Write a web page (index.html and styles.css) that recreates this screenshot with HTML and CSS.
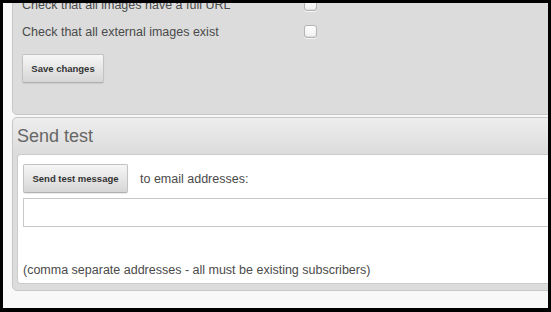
FILE: index.html
```html
<!DOCTYPE html>
<html>
<head>
<meta charset="utf-8">
<link rel="stylesheet" href="styles.css">
</head>
<body>
<div class="screen">
  <div class="panel panel-top">
    <div class="row">
      <span class="label">Check that all images have a full URL</span>
      <span class="check"></span>
    </div>
    <div class="row">
      <span class="label">Check that all external images exist</span>
      <span class="check"></span>
    </div>
    <button class="btn btn-save">Save changes</button>
  </div>
  <div class="panel panel-send">
    <div class="panel-head">Send test</div>
    <div class="panel-body">
      <div class="send-row">
        <button class="btn btn-send">Send test message</button>
        <span class="to">to email addresses:</span>
      </div>
      <div class="input"></div>
      <p class="note">(comma separate addresses - all must be existing subscribers)</p>
    </div>
  </div>
</div>
</body>
</html>
```

FILE: styles.css
```css
html, body {
  margin: 0;
  padding: 0;
  background: #000;
  height: 312px;
  overflow: hidden;
}
.screen {
  position: relative;
  top: 3px;
  margin-left: 3px;
  width: 545px;
  height: 305px;
  overflow: hidden;
  background: #f8f8f8;
  padding-left: 9px;
  box-sizing: border-box;
  font-family: "Liberation Sans", Arial, sans-serif;
  font-size: 12.5px;
  color: #4a4a4a;
}
.panel {
  width: 560px;
  box-sizing: border-box;
  background: #dcdcdc;
  border: 1px solid #c8c8c8;
}
.panel-top {
  margin-top: -20px;
  padding: 7px 0 31px 9px;
  border-radius: 0 0 5px 5px;
}
.row {
  display: flex;
  align-items: center;
  height: 27px;
}
.label {
  width: 282px;
  flex: none;
}
.check {
  width: 11px;
  height: 11px;
  border: 1px solid #b4b4b4;
  border-radius: 3px;
  background: linear-gradient(#ffffff, #f0f0f0);
  box-shadow: inset 0 -1px 1px rgba(0,0,0,0.08), 0 1px 0 rgba(255,255,255,0.7);
}
.btn {
  display: block;
  font-family: "Liberation Sans", Arial, sans-serif;
  font-weight: bold;
  font-size: 9.5px;
  white-space: nowrap;
  color: #333;
  height: 29px;
  padding: 0;
  background: linear-gradient(#f6f6f6, #d6d6d6);
  border: 1px solid #c2c2c2;
  border-bottom-color: #b0b0b0;
  border-radius: 2px;
  box-shadow: 0 1px 1px rgba(0,0,0,0.08);
}
.btn-save {
  margin-top: 9px;
  width: 82px;
}
.panel-send {
  margin-top: 2px;
  border-radius: 5px;
  padding: 0 0 6px 4px;
}
.panel-head {
  height: 36px;
  line-height: 36px;
  margin-left: -4px;
  padding-left: 4px;
  border-radius: 5px 0 0 0;
  background: linear-gradient(#eeeeee, #dcdcdc);
  font-size: 18px;
  color: #666;
}
.panel-body {
  background: #fff;
  border: 1px solid #cccccc;
  border-right: none;
  border-radius: 4px 0 0 4px;
  padding: 9px 0 0 5px;
  height: 119px;
}
.send-row {
  display: flex;
  align-items: center;
  gap: 12px;
}
.btn-send {
  width: 105px;
}
.to {
  color: #4a4a4a;
}
.input {
  margin-top: 5px;
  height: 27px;
  border: 1px solid #c8c8c8;
  border-right: none;
  background: #fff;
}
.note {
  margin: 36px 0 0 0;
  line-height: 15px;
}
```
